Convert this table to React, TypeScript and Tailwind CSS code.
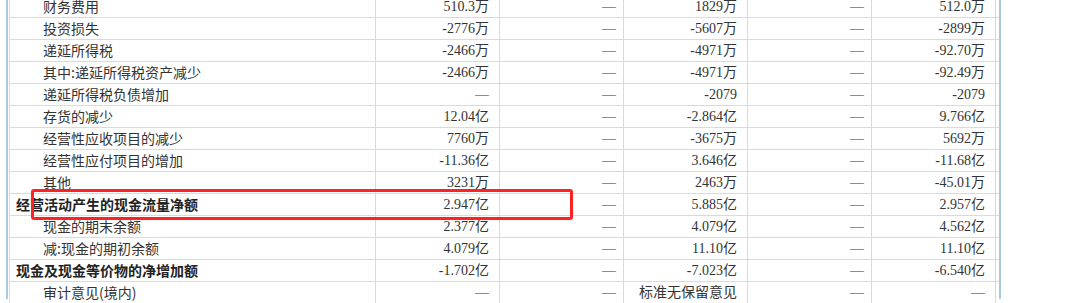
const rows = [
  { label: '财务费用', values: ['510.3万', '—', '1829万', '—', '512.0万'] },
  { label: '投资损失', values: ['-2776万', '—', '-5607万', '—', '-2899万'] },
  { label: '递延所得税', values: ['-2466万', '—', '-4971万', '—', '-92.70万'] },
  { label: '其中:递延所得税资产减少', values: ['-2466万', '—', '-4971万', '—', '-92.49万'] },
  { label: '递延所得税负债增加', values: ['—', '—', '-2079', '—', '-2079'] },
  { label: '存货的减少', values: ['12.04亿', '—', '-2.864亿', '—', '9.766亿'] },
  { label: '经营性应收项目的减少', values: ['7760万', '—', '-3675万', '—', '5692万'] },
  { label: '经营性应付项目的增加', values: ['-11.36亿', '—', '3.646亿', '—', '-11.68亿'] },
  { label: '其他', values: ['3231万', '—', '2463万', '—', '-45.01万'] },
  { label: '经营活动产生的现金流量净额', values: ['2.947亿', '—', '5.885亿', '—', '2.957亿'], bold: true },
  { label: '现金的期末余额', values: ['2.377亿', '—', '4.079亿', '—', '4.562亿'] },
  { label: '减:现金的期初余额', values: ['4.079亿', '—', '11.10亿', '—', '11.10亿'] },
  { label: '现金及现金等价物的净增加额', values: ['-1.702亿', '—', '-7.023亿', '—', '-6.540亿'], bold: true },
  { label: '审计意见(境内)', values: ['—', '—', '标准无保留意见', '—', '—'] },
];

export default function App() {
  return (
    <div className="relative w-[1080px] h-[303px] overflow-hidden bg-white text-[14px] text-[#333] font-['Liberation_Serif','Noto_Sans_CJK_SC',serif]">
      {/* panel with blue side borders */}
      <div className="ml-[6px] w-[995px] h-full border-x-2 border-[#a9cbe2] pl-px">
        <div className="-mt-[4px] border-l border-[#dadada]">
          {rows.map(({ label, values, bold }) => (
            <div key={label} className="flex h-[22px] border-b border-[#dadada]">
              <div
                className={`w-[366px] shrink-0 flex items-center border-r border-[#dadada] font-['Noto_Sans_CJK_SC',sans-serif] ${
                  bold ? 'pl-[6px] font-bold text-[#222]' : 'pl-[33px]'
                }`}
              >
                {label}
              </div>
              {values.map((v, i) => (
                <div
                  key={i}
                  className={`w-[124px] shrink-0 flex items-center justify-end border-r border-[#dadada] ${
                    i % 2 === 1 ? 'pr-[7px]' : 'pr-[10px]'
                  }`}
                >
                  {v}
                </div>
              ))}
            </div>
          ))}
        </div>
      </div>

      {/* highlight annotation */}
      <div className="absolute left-[31px] top-[189px] w-[542px] h-[31px] border-[3px] border-[#ff2222] rounded-[3px]" />
    </div>
  );
}
